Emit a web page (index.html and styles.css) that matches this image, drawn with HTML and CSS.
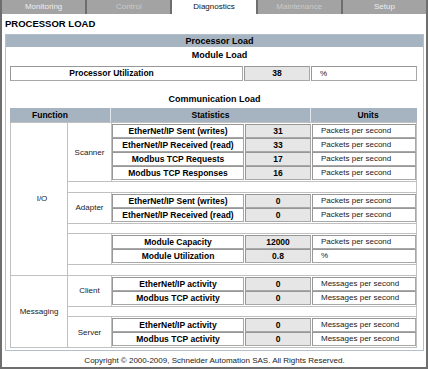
FILE: index.html
```html
<!DOCTYPE html>
<html>
<head>
<meta charset="utf-8">
<link rel="stylesheet" href="styles.css">
</head>
<body>
<div class="frame">
  <div class="tabs">
    <div class="tab">Monitoring</div>
    <div class="tab dis">Control</div>
    <div class="tab active">Diagnostics</div>
    <div class="tab dis">Maintenance</div>
    <div class="tab">Setup</div>
  </div>
  <div class="content">
    <div class="title">PROCESSOR LOAD</div>
    <div class="box">
      <div class="bar">Processor Load</div>
      <div class="sub1">Module Load</div>
      <div class="util">
        <div class="cell lab wide">Processor Utilization</div>
        <div class="cell val">38</div>
        <div class="cell unit">%</div>
      </div>
      <div class="sub2">Communication Load</div>
      <div class="head">
        <div class="hc hfn">Function</div>
        <div class="hc hst">Statistics</div>
        <div class="hc hun">Units</div>
      </div>
      <div class="comm">
        <div class="fn io">I/O</div>
        <div class="sub">Scanner</div>
        <div class="stats">
          <div class="row"><div class="cell lab">EtherNet/IP Sent (writes)</div><div class="cell val">31</div><div class="cell unit">Packets per second</div></div>
          <div class="row"><div class="cell lab">EtherNet/IP Received (read)</div><div class="cell val">33</div><div class="cell unit">Packets per second</div></div>
          <div class="row"><div class="cell lab">Modbus TCP Requests</div><div class="cell val">17</div><div class="cell unit">Packets per second</div></div>
          <div class="row"><div class="cell lab">Modbus TCP Responses</div><div class="cell val">16</div><div class="cell unit">Packets per second</div></div>
        </div>
        <div class="empty"></div>
        <div class="sub">Adapter</div>
        <div class="stats">
          <div class="row"><div class="cell lab">EtherNet/IP Sent (writes)</div><div class="cell val">0</div><div class="cell unit">Packets per second</div></div>
          <div class="row"><div class="cell lab">EtherNet/IP Received (read)</div><div class="cell val">0</div><div class="cell unit">Packets per second</div></div>
        </div>
        <div class="empty"></div>
        <div class="sub"></div>
        <div class="stats">
          <div class="row"><div class="cell lab">Module Capacity</div><div class="cell val">12000</div><div class="cell unit">Packets per second</div></div>
          <div class="row"><div class="cell lab">Module Utilization</div><div class="cell val">0.8</div><div class="cell unit">%</div></div>
        </div>
        <div class="empty"></div>
        <div class="fn msg">Messaging</div>
        <div class="sub">Client</div>
        <div class="stats">
          <div class="row"><div class="cell lab">EtherNet/IP activity</div><div class="cell val">0</div><div class="cell unit">Messages per second</div></div>
          <div class="row"><div class="cell lab">Modbus TCP activity</div><div class="cell val">0</div><div class="cell unit">Messages per second</div></div>
        </div>
        <div class="empty"></div>
        <div class="sub">Server</div>
        <div class="stats">
          <div class="row"><div class="cell lab">EtherNet/IP activity</div><div class="cell val">0</div><div class="cell unit">Messages per second</div></div>
          <div class="row"><div class="cell lab">Modbus TCP activity</div><div class="cell val">0</div><div class="cell unit">Messages per second</div></div>
        </div>
      </div>
    </div>
    <div class="copy">Copyright © 2000-2009, Schneider Automation SAS. All Rights Reserved.</div>
  </div>
</div>
</body>
</html>
```

FILE: styles.css
```css
* { box-sizing: border-box; }
html, body { margin: 0; padding: 0; }
body {
  width: 428px;
  height: 369px;
  overflow: hidden;
  background: #6e6e6e;
  font-family: "Liberation Sans", Arial, sans-serif;
  color: #000;
}
.frame {
  width: 428px;
  height: 369px;
  padding: 0 2px 3px 2px;
  display: flex;
  flex-direction: column;
}
.tabs {
  display: flex;
  gap: 2px;
  height: 14px;
  flex: none;
}
.tab {
  flex: 1;
  background: #a3a3a3;
  color: #ededed;
  font-size: 8px;
  line-height: 14px;
  text-align: center;
}
.tab.dis { color: #c9c9c9; }
.tab.active { background: #fff; color: #111; }
.content {
  flex: 1;
  background: #fff;
  padding: 0 2px 0 3px;
}
.title {
  font-size: 9.5px;
  font-weight: bold;
  height: 16px;
  padding-top: 4px;
  line-height: 12px;
  margin-bottom: 4px;
}
.box {
  width: 419px;
  border: 1px solid #b3c0cc;
  padding: 0 0 2px 0;
}
.bar {
  height: 12px;
  line-height: 12px;
  background: #a6b3c1;
  font-size: 9px;
  font-weight: bold;
  text-align: center;
  padding-left: 10px;
}
.sub1, .sub2 {
  font-size: 9px;
  font-weight: bold;
  text-align: center;
  height: 17px;
  line-height: 17px;
}
.sub1 { padding-left: 10px; }
.sub2 { margin-top: 9px; height: 18px; line-height: 18px; }
.util {
  display: flex;
  width: 407px;
  margin-left: 4px;
  margin-top: 2px;
  height: 15px;
  gap: 1px;
}
.util .cell { height: 15px; line-height: 13px; }
.cell {
  border: 1px solid #979797;
  border-right-color: #a8a8a8;
  border-bottom-color: #a8a8a8;
  font-size: 8.5px;
  height: 14px;
  line-height: 12px;
  white-space: nowrap;
  overflow: hidden;
}
.lab {
  width: 132px;
  font-weight: bold;
  text-align: center;
  background: #fff;
}
.lab.wide { width: 233px; padding-right: 30px; }
.val {
  width: 66px;
  background: #e6e6e6;
  font-weight: bold;
  text-align: center;
}
.unit {
  flex: 1;
  font-size: 8px;
  padding-left: 8px;
  color: #1a1a1a;
  background: #fff;
}
.head {
  display: flex;
  width: 407px;
  margin-left: 4px;
  gap: 1px;
  height: 14px;
  background: #e3e7eb;
}
.hc {
  background: #a6b3c1;
  font-size: 8.5px;
  font-weight: bold;
  text-align: center;
  line-height: 14px;
}
.hfn { width: 100px; padding-right: 20px; }
.hst { width: 199px; }
.hun { flex: 1; padding-left: 8px; }
.comm {
  display: grid;
  width: 407px;
  margin-left: 4px;
  grid-template-columns: 56px 43px 1fr;
  gap: 1px;
  padding: 1px;
  background: #c0c0c0;
}
.fn, .sub {
  background: #fff;
  font-size: 8px;
  color: #222;
  display: flex;
  align-items: center;
  justify-content: center;
}
.io { grid-column: 1; grid-row: 1 / 7; padding-left: 6px; }
.msg { grid-column: 1; grid-row: 7 / 10; }
.sub { grid-column: 2; }
.stats {
  grid-column: 3;
  background: #fff;
  padding: 1px 0;
  display: flex;
  flex-direction: column;
}
.row { display: flex; gap: 1px; }
.empty {
  grid-column: 2 / 4;
  height: 9.5px;
  background: #fff;
}
.copy {
  text-align: center;
  font-size: 8px;
  color: #222;
  margin-top: 4px;
  line-height: 12px;
}
```
